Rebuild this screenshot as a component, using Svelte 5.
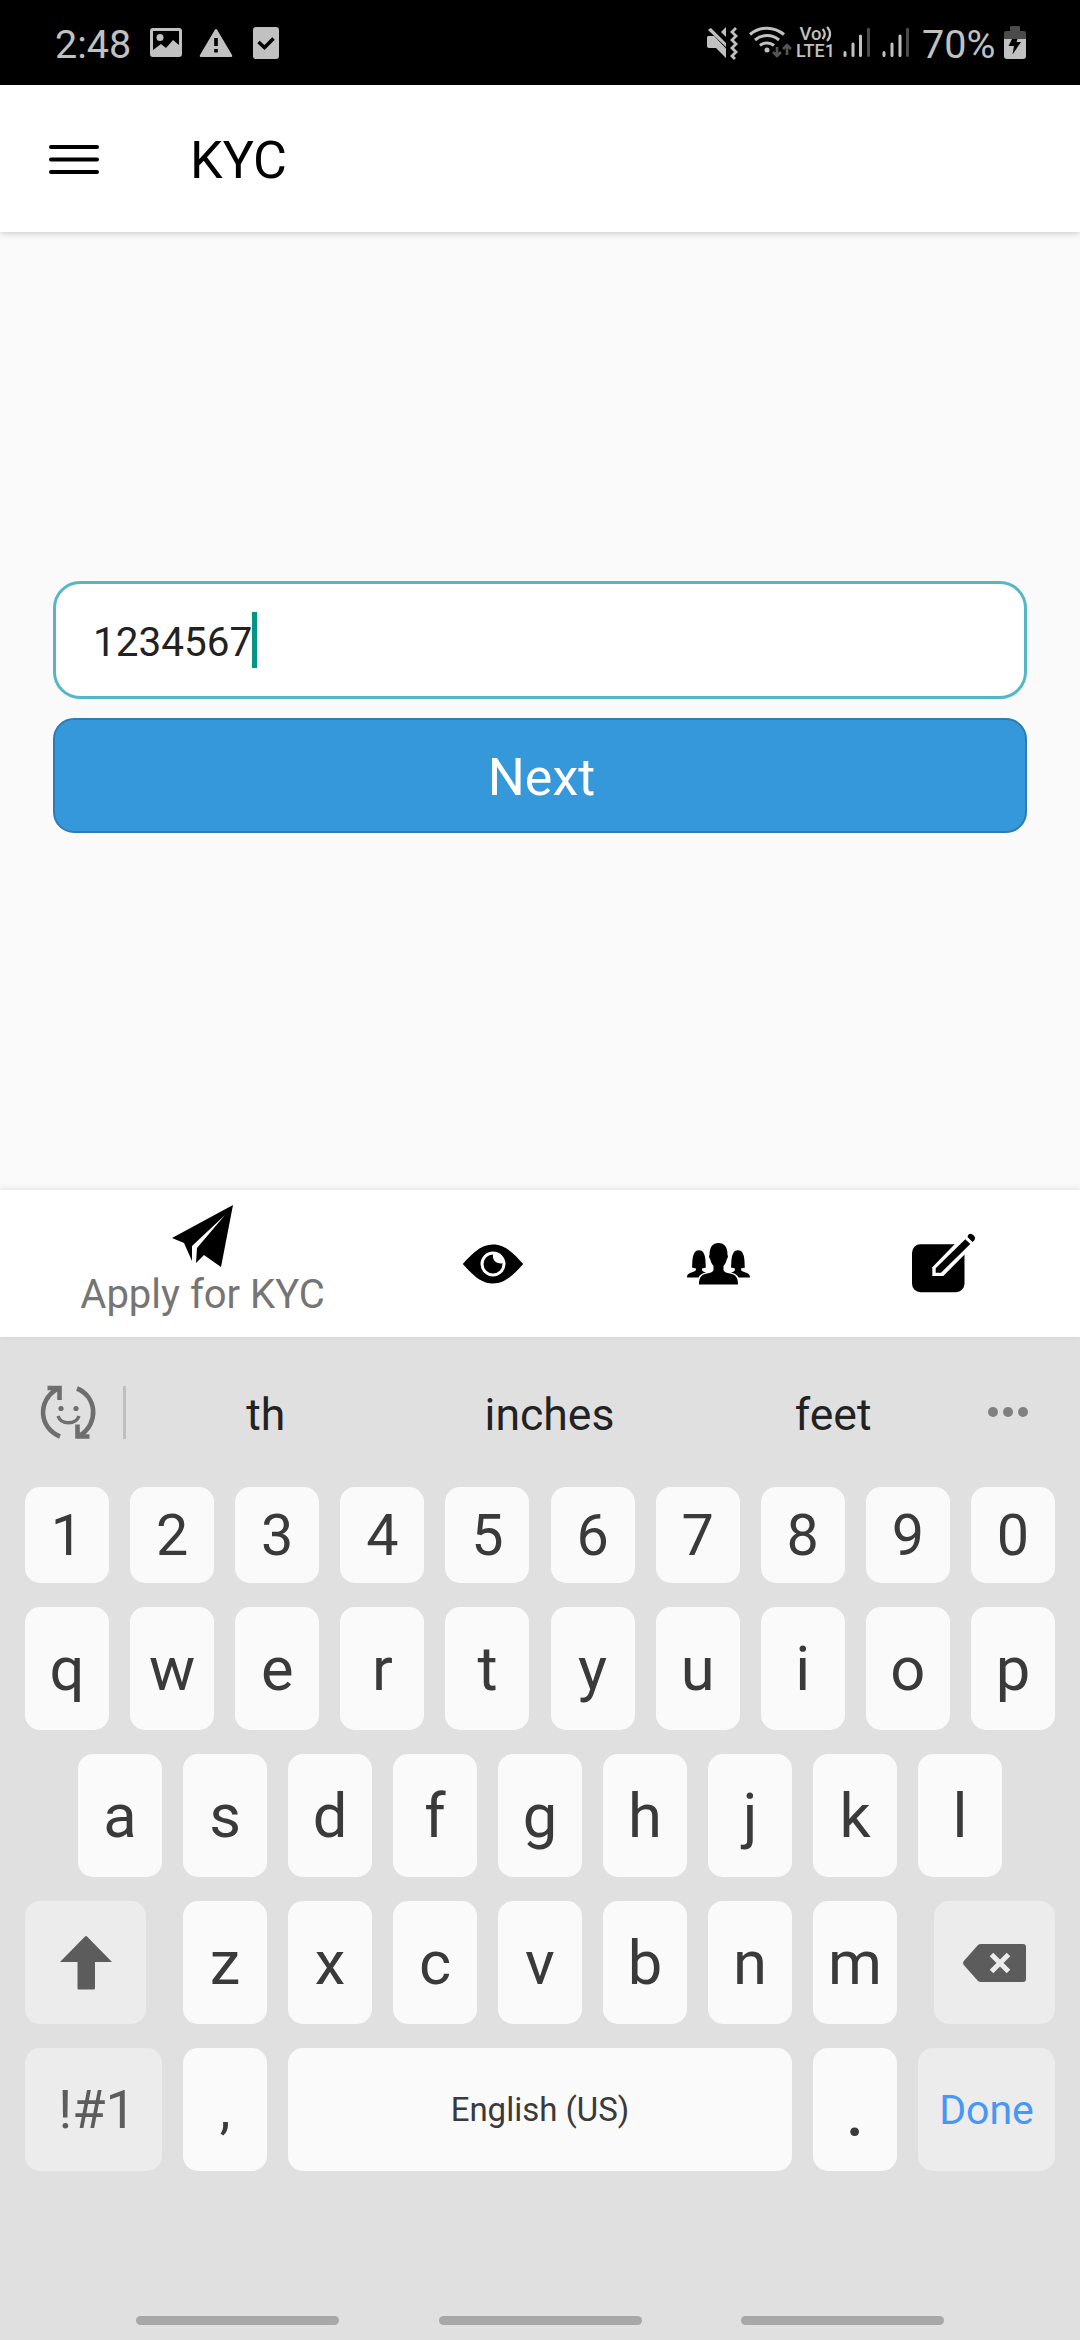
<script>
  const digits = '1234567890'.split('');
  const top = 'qwertyuiop'.split('');
  const home = 'asdfghjkl'.split('');
  const bottom = 'zxcvbnm'.split('');
</script>

<div class="screen">
  <header class="status">
    <span class="time">2:48</span>
    <svg class="notes" width="132" height="34" viewBox="0 0 132 34" fill="#c1c1c1">
      <path fill-rule="evenodd" d="M3 1h26a3 3 0 0 1 3 3v23a3 3 0 0 1-3 3H3a3 3 0 0 1-3-3V4a3 3 0 0 1 3-3zM3 4v19l8-6 5 4 7-8 6 5V4z" />
      <circle cx="10" cy="10.500" r="3.500" />
      <path fill-rule="evenodd" d="M67 2.500l15 25.500c.6 1.200.2 2-1 2H51c-1.200 0-1.600-.8-1-2l15-25.500q1-1.200 2 0zM64.200 11v8h3.600v-8zM64.200 22v3.500h3.600V22z" />
      <rect x="103" y="0" width="26" height="32" rx="3" />
      <path d="M108.500 15l6 5.500 9-9" fill="none" stroke="#000" stroke-width="3.500" />
    </svg>
    <svg class="radio" width="206" height="40" viewBox="0 0 206 40" fill="#c1c1c1">
      <path d="M2 10h6l12 12.500V32L10 22H3a2 2 0 0 1-2-2v-8a2 2 0 0 1 1-2zM3 3l2-1 15 15v4L2 4z" />
      <path d="M20 1v10l-5-5z" />
      <path d="M30 2l-4 4 4 4-4 4 4 4-4 4 4 4-4 4 3 3" fill="none" stroke="#c1c1c1" stroke-width="2.800" />
      <g fill="none" stroke="#c1c1c1" stroke-width="3">
        <path d="M44 8.500c10-8.500 24-8.500 34 0M49 14c7-6 17-6 24 0M54 19.500c4-3.500 10-3.500 14 0" />
      </g>
      <circle cx="61" cy="24" r="2.500" />
      <path d="M71 21v10M67 26l4 4 4-4M81 29V19M77 23l4-4 4 4" fill="none" stroke="#555" stroke-width="2.600" />
      <text class="vo" x="93.500" y="13.500">Vo</text>
      <path d="M116.500 3c3 3 3 7 0 10M121 1c4 4 4 10 0 14" fill="none" stroke="#c1c1c1" stroke-width="2.300" />
      <text class="lte" x="90" y="31">LTE1</text>
      <g stroke="#c1c1c1" stroke-width="3" stroke-linecap="round">
        <path d="M139 26.500v3M147 18v11.500M154.500 10v19.500M178 26.500v3M186 18v11.500M194 10v19.500" />
        <path stroke="#4b4b4b" d="M162.500 3.200V29.500M201.500 3.200V29.500" />
      </g>
    </svg>
    <span class="pct">70%</span>
    <svg class="battery" width="22" height="33" viewBox="0 0 22 33">
      <path fill="#4b4b4b" d="M7 0h8a1 1 0 0 1 1 1v4h4a2 2 0 0 1 2 2v7H0V7a2 2 0 0 1 2-2h4V1a1 1 0 0 1 1-1z" />
      <path fill="#c1c1c1" d="M0 13h22v17a3 3 0 0 1-3 3H3a3 3 0 0 1-3-3z" />
      <path fill="#000" d="M8 13h5.500l-1 3H17L8.500 28.500 10 20H4.500z" />
    </svg>
  </header>

  <nav class="appbar">
    <svg width="50" height="30" viewBox="0 0 50 30" stroke="#000" stroke-width="4" stroke-linecap="round">
      <path d="M2 3h46M2 15.500h46M2 28h46" />
    </svg>
    <h1>KYC</h1>
  </nav>

  <main>
    <div class="field"><span>1234567</span><i class="caret"></i></div>
    <button class="next">Next</button>
  </main>

  <nav class="tabs">
    <div class="tab apply">
      <svg width="62" height="62" viewBox="0 0 62 62">
        <path d="M61 0L0 33l12 5 8 18V41L53 10 25 43l-1 15 8-8 17 12z" />
      </svg>
      <span>Apply for KYC</span>
    </div>
    <div class="tab">
      <svg width="62" height="40" viewBox="0 0 62 40">
        <path d="M.8 20C9 11 18 .5 31 .5S53 11 61.200 20C53 29 44 39.500 31 39.500S9 29 .8 20z" />
        <circle cx="31" cy="20" r="11" fill="none" stroke="#fff" stroke-width="3" />
        <path fill="#fff" d="M31 10c-1 6 3 10 9 9.500 1-5-3-9.500-9-9.500z" />
      </svg>
    </div>
    <div class="tab">
      <svg width="63" height="42" viewBox="0 0 63 42">
        <path d="M5 24.500c.8-3-1-17.200 7-17.200s6.200 14.200 7 17.200l-4 1c0 3 1 3 4 4-4 1-6.500 2.500-7.500 5H0c0-4.500 4-4.500 8-6.500 1-.8 1-1.500 1-2.500z" />
        <path d="M58 24.500c-.8-3 1-17.200-7-17.200s-6.200 14.200-7 17.200l4 1c0 3-1 3-4 4 4 1 6.500 2.500 7.500 5H63c0-4.500-4-4.500-8-6.500-1-.8-1-1.500-1-2.500z" />
        <path d="M12 41.500c0-8 3-10 8-11 4-.8 6.500-1.500 6.500-4v-3.500c-2-2-3-5-3.300-7-1.300-1-1.400-3-.7-4 0-8 3-12 9-12s9 4 9 12c.7 1 .6 3-.7 4-.3 2-1.300 5-3.300 7v3.500c0 2.500 2.500 3.200 6.500 4 5 1 8 3 8 11z" />
      </svg>
    </div>
    <div class="tab">
      <svg width="64" height="59" viewBox="0 0 64 59">
        <rect x="0" y="10.300" width="52.500" height="48" rx="8.500" />
        <path d="M53 -.5L20.300 33.300V42h11L63 10z" fill="#fff" />
        <path d="M53.300 5.300L23.700 34.300v4.400H29L58.300 10zM55.500 3l5 5q3-2 2.500-4.500T59.500 0t-4 3z" />
      </svg>
    </div>
  </nav>

  <section class="keyboard">
    <div class="suggest">
      <svg class="emoji" width="56" height="56" viewBox="0 0 56 56" fill="none" stroke="#6e6e6e" stroke-width="4.600">
        <path d="M20 52.500C-1 44-3 17 17 5M37 4.500c20 8 22 35 3 47M7.500 4h12v12M49.500 52.500h-12v-12" />
        <path d="M18 32c3 9 18 9 21 0" stroke-width="3.400" />
        <circle cx="21" cy="24.500" r="2.600" fill="#6e6e6e" stroke="none" />
        <circle cx="36" cy="24.500" r="2.600" fill="#6e6e6e" stroke="none" />
      </svg>
      <span class="rule"></span>
      <div class="words"><span>th</span><span>inches</span><span>feet</span></div>
      <svg width="42" height="12" viewBox="0 0 42 12" fill="#808080">
        <circle cx="6" cy="6" r="5" /><circle cx="21" cy="6" r="5" /><circle cx="36" cy="6" r="5" />
      </svg>
    </div>

    <div class="row digits">{#each digits as k}<span class="key">{k}</span>{/each}</div>
    <div class="row">{#each top as k}<span class="key">{k}</span>{/each}</div>
    <div class="row home">{#each home as k}<span class="key">{k}</span>{/each}</div>
    <div class="row">
      <span class="key fn wide">
        <svg width="52" height="54" viewBox="0 0 52 54"><path fill="#5c5c5c" d="M25 .5q1-.8 2 0L52 26H35v26q0 1.500-1.500 1.500h-15Q17.500 53.500 17.500 52V26H0z" /></svg>
      </span>
      <div class="letters">{#each bottom as k}<span class="key">{k}</span>{/each}</div>
      <span class="key fn wide">
        <svg width="63" height="38" viewBox="0 0 63 38">
          <path fill="#5c5c5c" d="M18 0h42a3 3 0 0 1 3 3v32a3 3 0 0 1-3 3H18q-2 0-3-1L.8 21q-1.400-2 0-4L15 1q1-1 3-1z" />
          <path d="M28.500 10.500l17 17M45.500 10.500l-17 17" stroke="#ececec" stroke-width="5" />
        </svg>
      </span>
    </div>
    <div class="row">
      <span class="key fn sym">!#1</span>
      <span class="key comma">,</span>
      <span class="key space">English (US)</span>
      <span class="key dot">.</span>
      <span class="key fn done">Done</span>
    </div>
    <div class="gestures"><i></i><i></i><i></i></div>
  </section>
</div>

<style>
  :global(body) { margin: 0; background: #fafafa; }
  .screen { width: 1080px; height: 2340px; display: flex; flex-direction: column; overflow: hidden; font-family: Roboto, "Liberation Sans", sans-serif; background: #fafafa; }
  svg { display: block; flex: none; overflow: visible; }
  .status { height: 85px; flex: none; box-sizing: border-box; background: #000; color: #c1c1c1; display: flex; align-items: flex-start; padding: 27px 54px 0 55px; font-size: 39.500px; line-height: 36px; }
  .time { width: 95px; white-space: nowrap; }
  .radio { margin: -1px 0 0 424px; }
  .pct { margin-left: 10px; width: 76px; white-space: nowrap; }
  .battery { margin-left: auto; margin-top: -1px; }
  .vo { font-size: 18.500px; font-weight: 500; }
  .lte { font-size: 18px; font-weight: 500; }
  .appbar { height: 147px; flex: none; box-sizing: border-box; background: #fff; display: flex; align-items: center; padding: 1px 49px 0; position: relative; z-index: 1; box-shadow: 0 1px 7px rgba(0,0,0,.22); }
  h1 { margin: 2px 0 0 91px; font-size: 52px; font-weight: 400; color: #000; }
  main { height: 958px; flex: none; box-sizing: border-box; padding: 349px 53px 0; display: flex; flex-direction: column; gap: 19px; }
  .field { height: 118px; box-sizing: border-box; border: 3px solid #55b6c6; border-radius: 27px; background: #fff; display: flex; align-items: center; padding: 0 37px; font-size: 40.500px; color: #222; }
  .field span { padding-top: 3px; }
  .caret { width: 5px; height: 56px; background: #049587; }
  .next { height: 115px; box-sizing: border-box; border: 2px solid #2f7cb2; border-radius: 21px; background: #3598db; color: #fff; font: 400 52px Roboto, sans-serif; padding: 4px 0 0 3px; }
  .tabs { height: 147px; flex: none; background: #fff; display: flex; position: relative; z-index: 1; box-shadow: 0 -1px 6px rgba(0,0,0,.1); }
  .tab { width: 225.500px; flex: none; display: flex; align-items: center; justify-content: center; }
  .tab.apply { width: 380px; box-sizing: border-box; flex-direction: column; justify-content: flex-start; padding: 15px 0 0 25px; font-size: 40px; color: #757575; line-height: 56px; }
  .keyboard { height: 1003px; flex: none; background: #e0e0e0; display: flex; flex-direction: column; }
  .suggest { height: 150px; box-sizing: border-box; padding: 0 51px 0 40px; display: flex; align-items: center; }
  .rule { width: 3px; height: 53px; background: #bfbfbf; margin-left: 27px; }
  .words { flex: 1; display: grid; grid-template-columns: repeat(3, 1fr); text-align: center; font-size: 44.500px; color: #222; padding-top: 6px; margin: 0 12px 0 -2px; }
  .row { display: flex; justify-content: space-between; margin: 0 25px 24px; }
  .home { margin-left: 78px; margin-right: 78px; }
  .letters { display: flex; gap: 21px; }
  .key { width: 84px; height: 123px; border-radius: 15px; background: #fafafa; color: #3a3a3a; display: flex; align-items: center; justify-content: center; font-size: 61.500px; }
  .digits .key { height: 96px; font-size: 57.500px; }
  .fn { background: #ececec; color: #5c5c5c; }
  .wide { width: 121px; }
  .sym { width: 137px; box-sizing: border-box; padding-left: 7px; font-size: 54px; }
  .comma { font-size: 54px; }
  .dot { font-size: 78px; }
  .space { width: 504px; font-size: 33px; }
  .done { width: 137px; font-size: 41px; color: #4697f6; }
  .gestures { margin-top: auto; display: flex; justify-content: space-between; padding: 0 136px 15px; }
  .gestures i { width: 203px; height: 9px; border-radius: 5px; background: #a8a8a8; }
</style>
